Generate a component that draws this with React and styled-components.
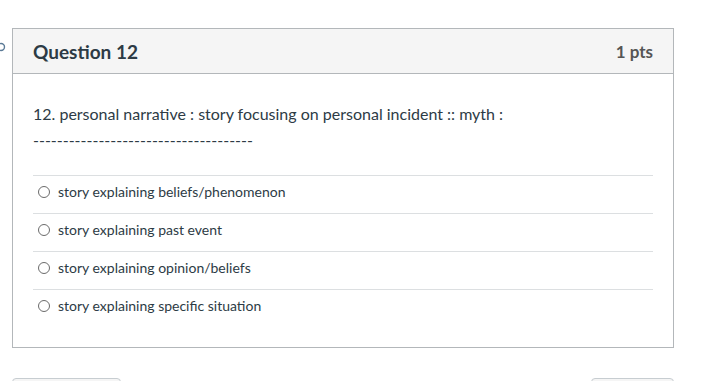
import React from 'react';
import styled, { createGlobalStyle } from 'styled-components';

const GlobalStyle = createGlobalStyle`
  body {
    margin: 0;
    background: #fff;
    font-family: Lato, "Liberation Sans", sans-serif;
    color: #2d3b45;
    overflow: hidden;
  }
`;

const Page = styled.div`
  position: relative;
  padding: 28px 38px 0 12px;
  height: 381px;
  box-sizing: border-box;
  overflow: hidden;
`;

const EdgeMark = styled.svg`
  position: absolute;
  left: -4px;
  top: 42px;
`;

const Card = styled.div`
  border: 1px solid #b3b7ba;
`;

const Header = styled.div`
  display: flex;
  align-items: center;
  justify-content: space-between;
  height: 44px;
  padding: 0 20px;
  background: #f5f5f5;
  border-bottom: 1px solid #b3b7ba;
`;

const Title = styled.h2`
  margin: 0;
  font-size: 19px;
  font-weight: 700;
  color: #2d3b45;
`;

const Points = styled.span`
  font-size: 17px;
  font-weight: 700;
  color: #555;
`;

const Body = styled.div`
  padding: 30px 20px 20px;
`;

const Prompt = styled.p`
  margin: 0;
  font-size: 16px;
  line-height: 20px;
  color: #2d3b45;
`;

const Blank = styled(Prompt)`
  margin-top: 6px;
  margin-bottom: 25px;
`;

const Answers = styled.div`
  display: flex;
  flex-direction: column;
`;

const Answer = styled.label`
  display: flex;
  align-items: center;
  gap: 8px;
  box-sizing: border-box;
  height: 38px;
  padding: 0 0 6px 5px;
  border-top: 1px solid #dcdfe1;
  font-size: 14px;
  color: #2d3b45;
`;

const Radio = styled.span`
  width: 12px;
  height: 12px;
  border-radius: 50%;
  border: 1px solid #6b6b6b;
  box-sizing: border-box;
  flex-shrink: 0;
`;

const Nav = styled.div`
  display: flex;
  justify-content: space-between;
  margin-top: 30px;
`;

const NavButton = styled.button`
  width: ${p => p.$w}px;
  height: 38px;
  border: 1px solid #c7cdd1;
  border-radius: 4px;
  background: #f5f5f5;
`;

const answers = [
  'story explaining beliefs/phenomenon',
  'story explaining past event',
  'story explaining opinion/beliefs',
  'story explaining specific situation',
];

export default function App() {
  return (
    <>
      <GlobalStyle />
      <Page>
        <EdgeMark width="10" height="10" viewBox="0 0 10 10">
          <circle cx="5" cy="5" r="3.5" fill="none" stroke="#5b7a96" strokeWidth="1.4" />
        </EdgeMark>
        <Card>
          <Header>
            <Title>Question 12</Title>
            <Points>1 pts</Points>
          </Header>
          <Body>
            <Prompt>12. personal narrative : story focusing on personal incident :: myth :</Prompt>
            <Blank>-------------------------------------</Blank>
            <Answers>
              {answers.map(a => (
                <Answer key={a}>
                  <Radio />
                  {a}
                </Answer>
              ))}
            </Answers>
          </Body>
        </Card>
        <Nav>
          <NavButton $w={109} aria-label="Previous" />
          <NavButton $w={83} aria-label="Next" />
        </Nav>
      </Page>
    </>
  );
}
